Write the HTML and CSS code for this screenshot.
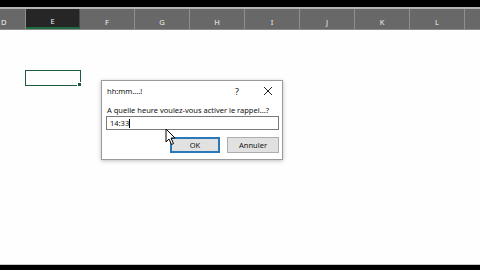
FILE: index.html
```html
<!DOCTYPE html>
<html lang="fr">
<head>
  <meta charset="UTF-8">
  <title>Rappel</title>
  <link rel="stylesheet" href="styles.css">
</head>
<body>
<div class="screen">
  <div class="topbar"></div>
  <div class="topline"></div>
  <div class="colheads">
    <div class="col col-d">D</div>
    <div class="col col-sel">E</div>
    <div class="col">F</div>
    <div class="col">G</div>
    <div class="col">H</div>
    <div class="col">I</div>
    <div class="col">J</div>
    <div class="col">K</div>
    <div class="col">L</div>
    <div class="col col-rest"></div>
  </div>
  <div class="sheet">
    <div class="cell-active"><span class="handle"></span></div>

    <div class="dialog">
      <div class="dlg-title">
        <span class="dlg-name">hh:mm....!</span>
        <span class="dlg-help">?</span>
        <span class="dlg-close">
          <svg width="10" height="10" viewBox="0 0 10 10"><path d="M1 1L9 9M9 1L1 9" stroke="#222" stroke-width="1"/></svg>
        </span>
      </div>
      <div class="dlg-body">
        <label class="dlg-label" for="heure">A quelle heure voulez-vous activer le rappel...?</label>
        <div class="dlg-input" id="heure">14:33<span class="caret"></span></div>
        <div class="dlg-buttons">
          <button class="btn btn-ok">OK</button>
          <button class="btn">Annuler</button>
        </div>
      </div>
    </div>

    <svg class="cursor" width="12" height="18" viewBox="0 0 12 18">
      <path d="M1 1L1 14L4 11L6.5 16.5L8.5 15.5L6 10L10 10Z" fill="#fff" stroke="#000" stroke-width="1" stroke-linejoin="round"/>
    </svg>
  </div>
  <div class="bottomline"></div>
  <div class="bottombar"></div>
</div>
</body>
</html>
```

FILE: styles.css
```css
html, body {
  margin: 0;
  padding: 0;
  background-color: #000;
}
.screen {
  width: 480px;
  height: 270px;
  display: flex;
  flex-direction: column;
  overflow: hidden;
  font-family: "Noto Sans", "Liberation Sans", sans-serif;
}
.topbar {
  height: 7px;
  background-color: #000;
}
.topline {
  height: 2px;
  background-color: #b4b4b4;
}
.colheads {
  height: 20px;
  display: flex;
  background-color: #686868;
  border-bottom: 1px solid #8a8a8a;
}
.col {
  width: 55px;
  flex-shrink: 0;
  border-right: 1px solid #8e8e8e;
  color: #f2f2f2;
  font-size: 7.5px;
  display: flex;
  align-items: center;
  justify-content: center;
  padding-top: 5px;
  box-sizing: border-box;
}
.col-d {
  width: 26px;
  justify-content: flex-start;
  padding-left: 1px;
}
.col-sel {
  width: 54px;
  background-color: #262626;
  border-bottom: 2px solid #1e6b43;
  border-right-color: #4a4a4a;
}
.col-rest {
  flex: 1;
  border-right: none;
}
.sheet {
  flex: 1;
  position: relative;
  background-color: #fefefe;
  padding-top: 40px;
}
.cell-active {
  position: relative;
  width: 54px;
  height: 14px;
  margin-left: 25px;
  border: 1px solid #1f5a3a;
}
.handle {
  position: absolute;
  right: -2px;
  bottom: -2px;
  width: 3px;
  height: 3px;
  background-color: #1f5a3a;
  border: 1px solid #fff;
}
.dialog {
  position: absolute;
  left: 101px;
  top: 50px;
  width: 182px;
  height: 80px;
  background-color: #fff;
  border: 1px solid #9a9a9a;
  box-shadow: 0 1px 4px rgba(0, 0, 0, 0.25);
  box-sizing: border-box;
  font-size: 7.5px;
  color: #111;
}
.dlg-title {
  height: 20px;
  display: flex;
  align-items: center;
  padding-left: 5px;
}
.dlg-name {
  flex: 1;
}
.dlg-help {
  width: 12px;
  margin-right: 20px;
  font-size: 9px;
  text-align: center;
}
.dlg-close {
  width: 10px;
  margin-right: 9px;
  display: flex;
}
.dlg-body {
  padding: 4px 3px 0 4px;
}
.dlg-label {
  display: block;
  margin-left: 1px;
  margin-bottom: 1px;
}
.dlg-input {
  height: 14px;
  border: 1px solid #7a7a7a;
  box-sizing: border-box;
  padding-left: 3px;
  display: flex;
  align-items: center;
}
.caret {
  width: 1px;
  height: 9px;
  background-color: #000;
}
.dlg-buttons {
  display: flex;
  justify-content: flex-end;
  gap: 7px;
  margin-top: 7px;
}
.btn {
  width: 52px;
  height: 16px;
  padding: 0;
  font-family: inherit;
  font-size: 7.5px;
  color: #111;
  background-color: #e1e1e1;
  border: 1px solid #adadad;
}
.btn-ok {
  border: 2px solid #2a78b8;
  width: 50px;
}
.cursor {
  position: absolute;
  left: 165px;
  top: 98px;
}
.bottomline {
  height: 1px;
  background-color: #c8c8c8;
}
.bottombar {
  height: 5px;
  background-color: #000;
}
```
